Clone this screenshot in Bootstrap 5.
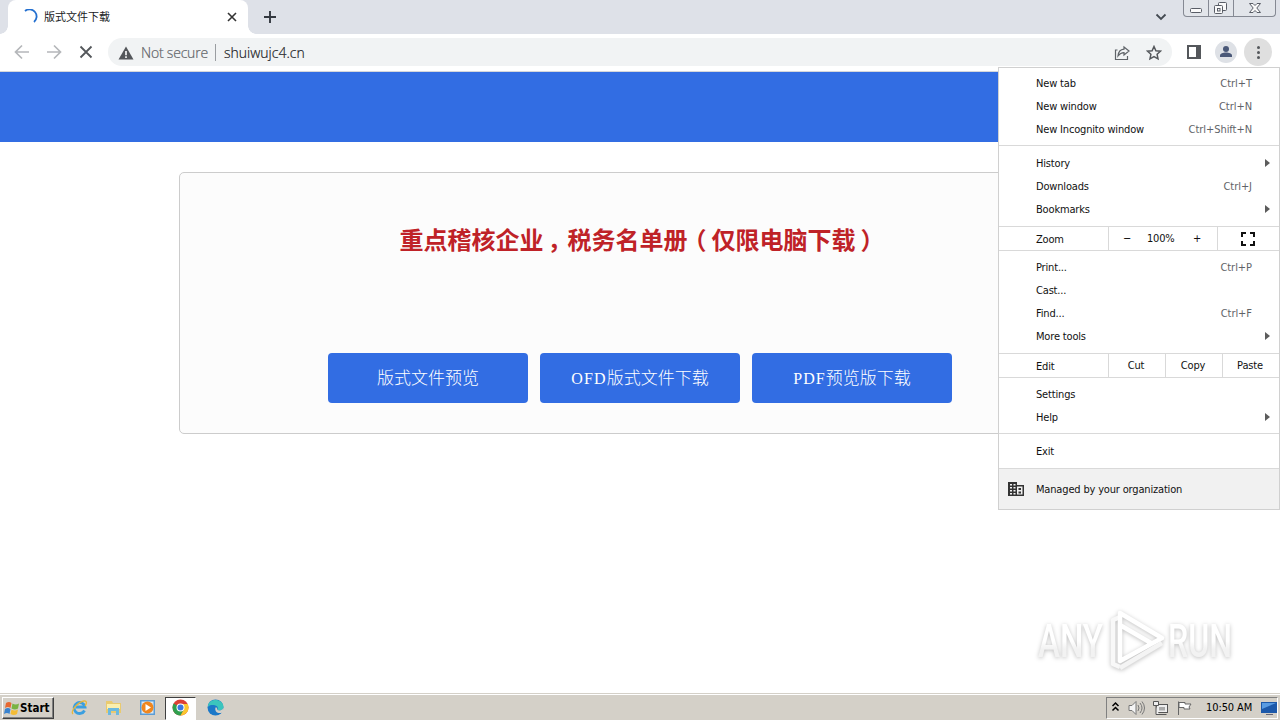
<!DOCTYPE html>
<html lang="zh-CN">
<head>
<meta charset="utf-8">
<title>版式文件下载</title>
<link rel="stylesheet" href="https://cdn.jsdelivr.net/npm/bootstrap@5.3.0/dist/css/bootstrap.min.css">
<style>
body{width:1280px;height:720px;overflow:hidden;background:#fff;font:11px/1.2 "DejaVu Sans Condensed","Noto Sans CJK SC",sans-serif;color:#202124}
svg{display:block;flex:none}
.tabstrip{height:34px;background:#dee1e8}
.tab{width:240px;height:34px;margin-left:8px;border-radius:8px 8px 0 0;background:#fff;position:relative}
.tab:before,.tab:after{content:"";position:absolute;bottom:0;width:8px;height:8px}
.tab:before{left:-8px;background:radial-gradient(circle at 0 0,#dee1e8 7.5px,#fff 8px)}
.tab:after{right:-8px;background:radial-gradient(circle at 100% 0,#dee1e8 7.5px,#fff 8px)}
.tab-title{font:11px/16px "Noto Sans CJK SC",sans-serif;margin:-2px 0 0 6px;width:183px}
.winbtns{width:93px;height:17px;margin-right:4px;border:1px solid #858993;border-top:0;border-radius:0 0 4px 4px;background:#e2e5ea}
.toolbar{height:38px;border-bottom:1px solid #d5d7da;padding:4px 8px 5px 14px}
.omni{width:1064px;height:28px;background:#f1f3f4;border-radius:14px;margin-left:12px;padding:1px 0 0 10px;font:300 14px/27px "Open Sans",sans-serif;color:#202124}
.secure{margin-left:7px;width:74px;color:#5f6368;letter-spacing:-.2px;-webkit-text-stroke:.2px}
.address{margin-left:8px;letter-spacing:0;-webkit-text-stroke:.2px}
.banner{height:70px;background:#326de3}
.panel{width:922px;height:262px;margin:30px auto 0;border:1px solid #ccc;border-radius:5px;background:#fcfcfc}
.headline{font:bold 24px/36px "Noto Sans CJK SC",sans-serif;color:#bf2227;margin:48px 0 0;white-space:nowrap;padding-right:1px}
.comma{margin:0 -4px 0 4px}
.open{margin:0 5px 0 -5px}
.close-p{margin:0 -5px 0 5px}
.blue-btn{width:200px;height:50px;border:0;border-radius:4px;background:#326de3;color:#fff;font:300 17px/46px "Noto Sans CJK SC",sans-serif;padding:0 0 2px}
.latin{font:16px "Liberation Serif",serif;letter-spacing:1.100px}
.appmenu{position:absolute;left:998px;top:67px;width:282px;height:443px;background:#fff;border:1px solid #d0d0d0;color:#111;letter-spacing:-.17px}
.grp{padding:4px 0}
.item{height:23px;padding:0 27px 0 37px;position:relative}
.item kbd{all:unset;color:#5f6368;letter-spacing:-.05px}
.item.sub:after{content:"";position:absolute;right:9px;top:7px;border:4px solid transparent;border-left:5px solid #5c5c5c;border-right:0}
.line{border-top:1px solid #d9d9d9}
.cell{border-left:1px solid #d9d9d9;height:23px}
.managed{height:41px;background:#f1f1f1;padding-left:9px}
.taskbar{height:27px;background:#d4d0c8;border-top:1px solid #d4d0c8;box-shadow:inset 0 1px #fff;padding:3px 2px 1px}
.start{width:52px;height:22px;border:1px solid;border-color:#fff #404040 #404040 #fff;box-shadow:inset -1px -1px #808080;font:bold 11.5px/20px "DejaVu Sans Condensed",sans-serif;color:#000;padding-left:1px}
.task{width:34px;height:23px;padding-bottom:2px}
.active-task{width:31px;margin:0 2px 0 1px;background:#fff;border:1px solid;border-color:#404040 #fff #fff #404040}
.tray{width:172px;height:22px;border:1px solid;border-color:#808080 #fff #fff #808080;padding:0 0 0 4px;color:#000}
.watermark{position:absolute;left:1036px;top:607px;filter:drop-shadow(0 1px 2px rgba(0,0,0,.25))}
</style>
</head>
<body class="d-flex flex-column m-0">
<header>
  <div class="tabstrip d-flex">
    <div class="tab d-flex align-items-center">
      <svg width="16" height="16" style="margin:-1px 0 0 14px" fill="none" stroke="#2470d0" stroke-width="1.8"><path d="M3 2A6.800 6.800 0 0 1 12 13"/></svg>
      <span class="tab-title">版式文件下载</span>
      <svg width="10" height="10" style="margin-left:0" stroke="#333" stroke-width="1.600"><path d="M1 1l8 8M9 1L1 9"/></svg>
    </div>
    <svg width="14" height="14" style="margin:10px 0 0 15px" stroke="#333840" stroke-width="1.9"><path d="M7 1v12M1 7h12"/></svg>
    <svg width="12" height="8" class="ms-auto" style="margin:13px 16px 0 0" fill="none" stroke="#444a52" stroke-width="1.800"><path d="M1.5 1.5L6 6l4.500-4.500"/></svg>
    <div class="winbtns">
      <svg width="92" height="16" fill="#fafafa" stroke="#595d66"><path d="M24.500 0v16M49.500 0v16" stroke="#858993"/><rect x="6.500" y="8.500" width="11" height="4" rx="1"/><rect x="34.500" y="2.500" width="8" height="8" rx="1"/><rect x="30.500" y="5.500" width="8" height="8" rx="1"/><rect x="33.500" y="8.500" width="2.500" height="2.500"/><path d="M65.500 3.500h3.500l2 2 2-2h3.500l-3.700 4.500 3.700 4.500h-3.500l-2-2-2 2h-3.500l3.700-4.500z"/></svg>
    </div>
  </div>
  <div class="toolbar d-flex align-items-center">
    <svg width="16" height="16" fill="none" stroke="#b5b7ba" stroke-width="1.7"><path d="M15 8H2M8 1.500L1.500 8 8 14.500"/></svg>
    <svg width="16" height="16" style="margin-left:16px" fill="none" stroke="#b5b7ba" stroke-width="1.700"><path d="M1 8h13M8 1.500L14.500 8 8 14.500"/></svg>
    <svg width="14" height="14" style="margin-left:17px;margin-right:3px" stroke="#54575b" stroke-width="1.800"><path d="M1.500 1.500l11 11M12.500 1.500l-11 11"/></svg>
    <div class="omni d-flex align-items-center">
      <svg width="16" height="14"><path d="M8 .5L15.500 13.500H.5z" fill="#54575b"/><path d="M8 5v4.300M8 10.300v1.700" stroke="#fff" stroke-width="1.600"/></svg>
      <span class="secure">Not secure</span>
      <span style="width:1px;height:17px;background:#9a9da1"></span>
      <span class="address">shuiwujc4.cn</span>
      <svg class="ms-auto" width="17" height="16" style="margin-right:15px" fill="none" stroke="#5f6368" stroke-width="1.200"><path d="M3.500 5H1.500v9.500h12V11M10 2l5 4-5 4V7.700C7 7.700 5.500 9 4 11c.3-3.500 2.500-6.500 6-6.800z"/></svg>
      <svg width="16" height="16" style="margin-right:10px" fill="none" stroke="#54575b" stroke-width="1.500"><path d="M8 1.500l1.900 4.200 4.600.5-3.400 3.100.9 4.500L8 11.500l-4 2.300.9-4.500-3.400-3.100 4.600-.5z"/></svg>
    </div>
    <svg width="14" height="14" style="margin-left:15px"><path d="M1 1h12v12H1z" fill="none" stroke="#54575b" stroke-width="2"/><path d="M9 0h5v14H9z" fill="#54575b"/></svg>
    <svg width="22" height="22" style="margin-left:14px"><circle cx="11" cy="11" r="11" fill="#dee1e6"/><circle cx="11" cy="8" r="3" fill="#4a5878"/><path d="M5 16v-1.500c0-2 3-3 6-3s6 1 6 3V16z" fill="#4a5878"/></svg>
    <svg width="28" height="28" style="margin-left:7px"><circle cx="14" cy="14" r="14" fill="#dfdfdf"/><g fill="#54575b"><circle cx="14.500" cy="9.500" r="1.500"/><circle cx="14.500" cy="14.500" r="1.500"/><circle cx="14.500" cy="19.500" r="1.500"/></g></svg>
  </div>
</header>
<main class="flex-grow-1">
  <div class="banner"></div>
  <section class="panel">
    <h1 class="headline text-center">重点稽核企业<span class="comma">，</span>税务名单册<span class="open">（</span>仅限电脑下载<span class="close-p">）</span></h1>
    <div class="d-flex justify-content-center" style="gap:12px;margin-top:96px">
      <button class="btn blue-btn">版式文件预览</button>
      <button class="btn blue-btn"><span class="latin">OFD</span>版式文件下载</button>
      <button class="btn blue-btn"><span class="latin">PDF</span>预览版下载</button>
    </div>
  </section>
</main>
<nav class="appmenu">
  <div class="grp">
    <div class="item d-flex align-items-center justify-content-between"><span>New tab</span><kbd>Ctrl+T</kbd></div>
    <div class="item d-flex align-items-center justify-content-between"><span>New window</span><kbd>Ctrl+N</kbd></div>
    <div class="item d-flex align-items-center justify-content-between"><span>New Incognito window</span><kbd>Ctrl+Shift+N</kbd></div>
  </div>
  <div class="line grp" style="padding-top:6px;padding-bottom:5px">
    <div class="item sub d-flex align-items-center"><span>History</span></div>
    <div class="item d-flex align-items-center justify-content-between"><span>Downloads</span><kbd>Ctrl+J</kbd></div>
    <div class="item sub d-flex align-items-center"><span>Bookmarks</span></div>
  </div>
  <div class="line d-flex">
    <div class="d-flex align-items-center" style="width:109px;padding:2px 0 0 37px">Zoom</div>
    <div class="cell d-flex align-items-center" style="width:109px;padding-left:14px"><span style="width:24px">−</span><span style="width:46px">100%</span><span>+</span></div>
    <div class="cell d-flex align-items-center flex-grow-1" style="padding-left:23px"><svg width="14" height="14" fill="none" stroke="#111" stroke-width="2"><path d="M1 5V1h4M9 1h4v4M13 9v4H9M5 13H1V9"/></svg></div>
  </div>
  <div class="line grp" style="padding-top:5px;padding-bottom:5px">
    <div class="item d-flex align-items-center justify-content-between"><span>Print...</span><kbd>Ctrl+P</kbd></div>
    <div class="item d-flex align-items-center"><span>Cast...</span></div>
    <div class="item d-flex align-items-center justify-content-between"><span>Find...</span><kbd>Ctrl+F</kbd></div>
    <div class="item sub d-flex align-items-center"><span>More tools</span></div>
  </div>
  <div class="line d-flex">
    <div class="d-flex align-items-center" style="width:109px;padding:2px 0 0 37px">Edit</div>
    <div class="cell d-flex align-items-center justify-content-center" style="width:57px;padding-right:2px">Cut</div>
    <div class="cell d-flex align-items-center justify-content-center" style="width:57px;padding-right:2px">Copy</div>
    <div class="cell d-flex align-items-center justify-content-center flex-grow-1" style="padding-right:2px">Paste</div>
  </div>
  <div class="line grp" style="padding-top:5px">
    <div class="item d-flex align-items-center"><span>Settings</span></div>
    <div class="item sub d-flex align-items-center"><span>Help</span></div>
  </div>
  <div class="line grp" style="padding-top:6px;padding-bottom:5px">
    <div class="item d-flex align-items-center"><span>Exit</span></div>
  </div>
  <div class="line managed d-flex align-items-center">
    <svg width="16" height="14"><path d="M0 0h9v3h7v11H0z" fill="#333"/><path d="M2 2h2v1.500H2zM5.500 2h2v1.500h-2zM2 5h2v1.500H2zM5.500 5h2v1.500h-2zM2 8h2v1.500H2zM5.500 8h2v1.500h-2zM2 11h2v1.500H2zM5.500 11h2v1.500h-2zM9 4.500h5.500v8H9z" fill="#f1f1f1"/><path d="M10.500 6h2.500v2h-2.500zM10.500 9.500h2.500v2h-2.500z" fill="#333"/></svg>
    <span style="margin:1px 0 0 12px">Managed by your organization</span>
  </div>
</nav>
<svg class="watermark" width="244" height="72">
  <defs><linearGradient id="fade" x1="0" y1="0" x2="0" y2="1"><stop offset=".5" stop-color="#fff"/><stop offset=".65" stop-color="#f2f2f2"/></linearGradient></defs>
  <g fill="url(#fade)" font-family="Roboto" font-weight="500" font-size="46"><text x="2" y="50" textLength="65" lengthAdjust="spacingAndGlyphs">ANY</text><text x="132" y="50" textLength="64" lengthAdjust="spacingAndGlyphs">RUN</text></g>
  <g fill="none" stroke-width="4.500" stroke-linejoin="round"><path d="M84 10l-7 3v44l7 3" stroke="#f8f8f8"/><path d="M84 61l42-25" stroke="#f4f4f4"/><path d="M84 54V6l42 25-42 23V18l31 18" stroke="#fff"/></g>
</svg>
<footer class="taskbar d-flex align-items-center">
  <div class="start d-flex align-items-center">
    <svg width="16" height="15"><path d="M2 2q3-2 5.500 0L6.500 7Q4 5 1 7z" fill="#e76932"/><path d="M8.500 2.500q3 2 6.500 0L14 7.500q-3 2-6.500 0z" fill="#79b342"/><path d="M1 8q3-2 5.500 0l-1 5Q3 11 0 13z" fill="#3a83cf"/><path d="M7.500 8.500q3 2 6.500 0L13 13q-3 2-6.500 0z" fill="#f4bc35"/></svg>
    <span>Start</span>
  </div>
  <div class="task d-flex align-items-center justify-content-center" style="margin-left:8px"><svg width="17" height="17" fill="none"><path d="M13.500 11.500A5.500 5.500 0 1 1 14 8H5" stroke="#3b9fe0" stroke-width="2.800"/><path d="M2 15C-1 12 7 3 13 2c4-.5 2 4 1 5" stroke="#e8b73a" stroke-width="1.300"/></svg></div>
  <div class="task d-flex align-items-center justify-content-center"><svg width="17" height="17"><path d="M1 2h6l1 2h8v10H1z" fill="#e9ca70"/><path d="M2 5h13v5H2z" fill="#fbefae"/><path d="M3 9h11v7h-3v-4H6v4H3z" fill="#6cb9df"/></svg></div>
  <div class="task d-flex align-items-center justify-content-center"><svg width="17" height="17"><rect x="1" y="1" width="15" height="15" fill="#5b9cd5"/><path d="M2.500 2.500h12v12h-12z" fill="#d9e8f5"/><circle cx="8.500" cy="8.500" r="6" fill="#f0861e"/><path d="M6.500 5l5.500 3.500L6.500 12z" fill="#fff"/></svg></div>
  <div class="task active-task d-flex align-items-center justify-content-center"><svg width="17" height="17" viewBox="0 0 17 17"><circle cx="8.500" cy="8.500" r="8" fill="#dd4034"/><path d="M8.500 8.500L1.600 4.500A8 8 0 0 0 8.500 16.500l3.500-6z" fill="#2fa04f"/><path d="M8.500 8.500V5h7.300A8 8 0 0 1 8.500 16.500l3.500-6z" fill="#fbc72f"/><circle cx="8.500" cy="8.500" r="4" fill="#fff"/><circle cx="8.500" cy="8.500" r="3" fill="#3b77e0"/></svg></div>
  <div class="task d-flex align-items-center justify-content-center"><svg width="17" height="17"><circle cx="8.500" cy="8.500" r="8" fill="#1b78c8"/><path d="M1 7C2-1 16-1 16.500 8c0 3-4 4-6 3 1-2 0-4-2-4.500C5.500 5.500 2 6 1 8z" fill="#3bc5bd"/><path d="M10.500 11c2 1 6 0 6-3v5c-2 1.500-6 1.500-7.500-.5C8 11 8 9 9 8c1 1 1.500 2 1.500 3z" fill="#d4d0c8"/></svg></div>
  <div class="tray d-flex align-items-center ms-auto">
    <svg width="9" height="12" style="margin-top:-3px" fill="none" stroke="#000" stroke-width="1.500"><path d="M1.500 5l3-3 3 3M1.500 9.500l3-3 3 3"/></svg>
    <svg width="18" height="16" style="margin-left:8px" fill="#f5f5f5" stroke="#777"><path d="M1 5.500h3l4-4v13l-4-4H1z"/><path d="M10 5q2 3 0 6M12 3q4 5 0 10M14 1.500q5 6.500 0 13" fill="none"/></svg>
    <svg width="17" height="16" style="margin-left:6px" fill="#eee" stroke="#555"><rect x="4.500" y="4.500" width="11" height="8"/><path d="M6.500 14.500h8" /><path d="M1.500 1.500h5v4h-5zM4 6v8.500h3" /><path d="M7 7h6v3.500H7z" fill="#aaa" stroke="none"/></svg>
    <svg width="17" height="16" style="margin-left:7px" fill="#fff" stroke="#666"><path d="M2.500 15V1.500M3 2.500h6v1.500h6l-2 3 1 2H8V7.500H3z"/></svg>
    <span style="margin-left:13px;white-space:nowrap;width:50px;letter-spacing:-.1px">10:50 AM</span>
    <svg width="16" height="16" style="margin-left:auto"><rect y="2" width="16" height="11" fill="#1d59aa"/><path d="M1 3h14L1 9z" fill="#5a9ce2"/><path d="M5 14h7v1H5z" fill="#667"/></svg>
  </div>
</footer>
<script src="https://cdn.jsdelivr.net/npm/bootstrap@5.3.0/dist/js/bootstrap.bundle.min.js"></script>
</body>
</html>
